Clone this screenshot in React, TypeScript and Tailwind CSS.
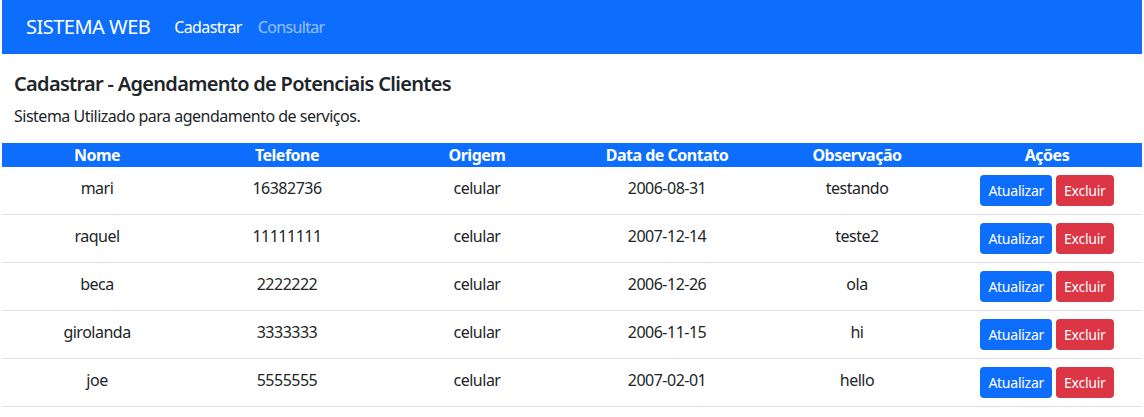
const rows = [
  { nome: "mari", telefone: "16382736", origem: "celular", data: "2006-08-31", obs: "testando" },
  { nome: "raquel", telefone: "11111111", origem: "celular", data: "2007-12-14", obs: "teste2" },
  { nome: "beca", telefone: "2222222", origem: "celular", data: "2006-12-26", obs: "ola" },
  { nome: "girolanda", telefone: "3333333", origem: "celular", data: "2006-11-15", obs: "hi" },
  { nome: "joe", telefone: "5555555", origem: "celular", data: "2007-02-01", obs: "hello" },
];

const headers = ["Nome", "Telefone", "Origem", "Data de Contato", "Observação", "Ações"];

export default function App() {
  return (
    <div className="min-h-[417px] bg-white px-[2px] font-['Noto_Sans',sans-serif] tracking-[-0.5px] text-[#212529]">
      <nav className="flex h-[54px] items-center bg-[#0d6efd] pl-6">
        <span className="mr-4 text-[20px] text-white">SISTEMA WEB</span>
        <a className="px-2 text-[16px] tracking-[-0.65px] text-white">Cadastrar</a>
        <a className="px-2 text-[16px] tracking-[-0.65px] text-white/55">Consultar</a>
      </nav>

      <div className="px-3 pt-[18px]">
        <h5 className="mb-2 text-[20px] leading-[24px] font-semibold tracking-[-0.7px]">
          Cadastrar - Agendamento de Potenciais Clientes
        </h5>
        <p className="mb-[15px] text-[16px] leading-[24px]">
          Sistema Utilizado para agendamento de serviços.
        </p>
      </div>

      <table className="w-full table-fixed border-collapse text-center text-[16px] leading-[24px]">
        <thead>
          <tr className="bg-[#0d6efd] text-white">
            {headers.map((h) => (
              <th key={h} className="p-0 font-bold">
                {h}
              </th>
            ))}
          </tr>
        </thead>
        <tbody>
          {rows.map((r) => (
            <tr key={r.nome} className="border-b border-[#dee2e6] align-top">
              <td className="pt-[9px] pb-[7px]">{r.nome}</td>
              <td className="pt-[9px] pb-[7px]">{r.telefone}</td>
              <td className="pt-[9px] pb-[7px]">{r.origem}</td>
              <td className="pt-[9px] pb-[7px]">{r.data}</td>
              <td className="pt-[9px] pb-[7px]">{r.obs}</td>
              <td className="py-2">
                <div className="flex justify-center gap-1">
                  <button className="h-[31px] rounded bg-[#0d6efd] px-2 text-[14px] tracking-[-0.25px] text-white">
                    Atualizar
                  </button>
                  <button className="h-[31px] rounded bg-[#dc3545] px-2 text-[14px] tracking-[-0.25px] text-white">
                    Excluir
                  </button>
                </div>
              </td>
            </tr>
          ))}
        </tbody>
      </table>
    </div>
  );
}
